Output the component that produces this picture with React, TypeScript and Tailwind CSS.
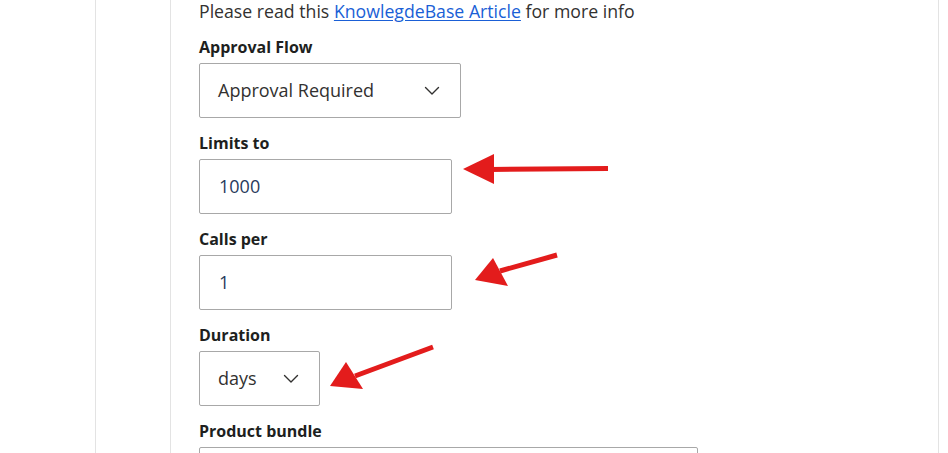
import React from 'react';

const font = { fontFamily: '"Open Sans", "Noto Sans", sans-serif' };

function Chevron() {
  return (
    <svg width="16" height="10" viewBox="0 0 16 10" fill="none" className="text-[#323130]">
      <path d="M1.5 1.5 L8 8 L14.5 1.5" stroke="currentColor" strokeWidth="1.4" strokeLinecap="round" strokeLinejoin="round" />
    </svg>
  );
}

function Label({ children }: { children: React.ReactNode }) {
  return <div className="mt-[14px] mb-[5px] h-[22px] leading-[22px] text-[16px] font-bold text-[#201f1e]">{children}</div>;
}

export default function App() {
  return (
    <div className="relative w-[948px] h-[453px] overflow-hidden bg-white flex" style={font}>
      {/* side panels */}
      <div className="w-[95px] shrink-0" />
      <div className="w-[75px] shrink-0 border-l border-[#e3e3e3]" />
      <div className="flex-1 border-l border-[#e3e3e3] pl-[28px]">
        <div className="mt-[-2px] h-[26px] leading-[26px] text-[17.7px] text-[#323130]">
          Please read this{' '}
          <a className="text-[#1a5fd6] underline underline-offset-2">KnowlegdeBase Article</a> for more info
        </div>

        <div className="mt-[12px] mb-[5px] h-[22px] leading-[22px] text-[16px] font-bold text-[#201f1e]">Approval Flow</div>
        <div className="w-[262px] h-[55px] border border-[#a8a8a8] rounded-[2px] flex items-center justify-between pl-[18px] pr-[20px] text-[18px] text-[#323130]">
          <span>Approval Required</span>
          <Chevron />
        </div>

        <Label>Limits to</Label>
        <div className="w-[253px] h-[55px] border border-[#a8a8a8] rounded-[2px] flex items-center pl-[19px] text-[18px] text-[#283a5c]">
          1000
        </div>

        <Label>Calls per</Label>
        <div className="w-[253px] h-[55px] border border-[#a8a8a8] rounded-[2px] flex items-center pl-[19px] text-[18px] text-[#283a5c]">
          1
        </div>

        <Label>Duration</Label>
        <div className="w-[121px] h-[55px] border border-[#a8a8a8] rounded-[2px] flex items-center justify-between pl-[18px] pr-[20px] text-[18px] text-[#323130]">
          <span>days</span>
          <Chevron />
        </div>

        <Label>Product bundle</Label>
        <div className="w-[499px] h-[55px] border border-[#a8a8a8] rounded-[2px]" />
      </div>
      <div className="w-[10px] shrink-0 border-l border-[#e3e3e3]" />

      {/* annotation arrows */}
      <svg className="absolute inset-0 pointer-events-none" width="948" height="453" viewBox="0 0 948 453">
        <g fill="#e31c1c" stroke="#e31c1c">
          <line x1="490" y1="169.5" x2="608" y2="168.5" strokeWidth="5" />
          <polygon points="463,169 494,154 494,184" stroke="none" />
          <line x1="500" y1="271" x2="557" y2="255" strokeWidth="5" />
          <polygon points="475,280 493,258 508,286" stroke="none" />
          <line x1="355" y1="376" x2="433" y2="347" strokeWidth="5" />
          <polygon points="330,386 346,362 363,389" stroke="none" />
        </g>
      </svg>
    </div>
  );
}
